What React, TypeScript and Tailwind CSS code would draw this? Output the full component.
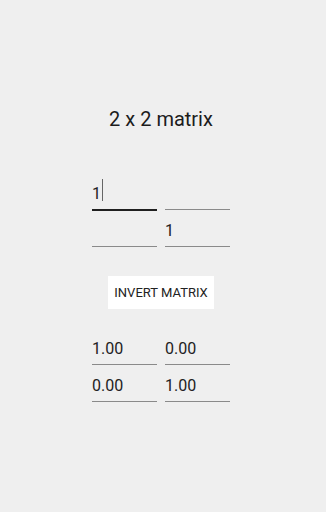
import React from 'react';

type FieldProps = { value?: string; focused?: boolean };

function Field({ value = '', focused = false }: FieldProps) {
  return (
    <div className="w-[65px] h-[37px] flex flex-col">
      <div className="h-[27px] text-[16px] leading-6 text-[#222] flex items-start">
        <span>{value}</span>
        {focused && <span className="inline-block w-px h-[22px] bg-[#666] ml-[1px] mt-[-3px]" />}
      </div>
      <div className={focused ? 'h-[2px] bg-[#1f1f1f]' : 'h-px bg-[#8a8a8a]'} />
    </div>
  );
}

export default function App() {
  const inputs = [
    [{ value: '1', focused: true }, { value: '' }],
    [{ value: '' }, { value: '1' }],
  ];
  const result = [
    ['1.00', '0.00'],
    ['0.00', '1.00'],
  ];

  return (
    <div className="min-h-[512px] w-full bg-[#efefef]" style={{ fontFamily: 'Roboto, "Liberation Sans", sans-serif' }}>
      <div className="w-[322px] flex flex-col items-center pt-[105px]">
        <h1 className="text-[20px] leading-7 text-[#1c1c1c]">2 x 2 matrix</h1>

        {/* input matrix */}
        <div className="flex flex-col mt-[49px]">
          {inputs.map((row, i) => (
            <div key={i} className="flex gap-2">
              {row.map((cell, j) => (
                <Field key={j} value={cell.value} focused={cell.focused} />
              ))}
            </div>
          ))}
        </div>

        <button className="mt-[20px] h-[33px] w-[106px] bg-white text-[13px] text-[#222] uppercase">
          Invert Matrix
        </button>

        {/* inverted result */}
        <div className="flex flex-col mt-[28px]">
          {result.map((row, i) => (
            <div key={i} className="flex gap-2">
              {row.map((v, j) => (
                <Field key={j} value={v} />
              ))}
            </div>
          ))}
        </div>
      </div>
    </div>
  );
}
